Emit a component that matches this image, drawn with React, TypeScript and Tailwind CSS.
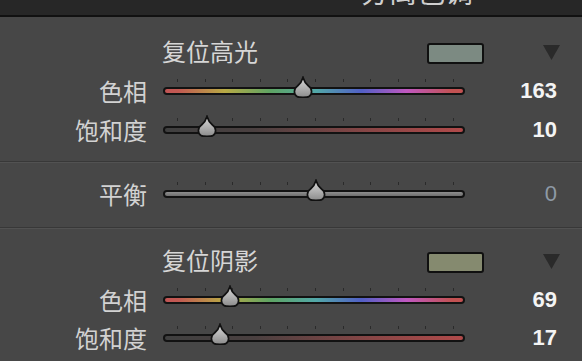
import React from "react";

const CJK = { fontFamily: '"Noto Sans CJK SC", "Noto Sans", sans-serif' };
const NUM = { fontFamily: '"Liberation Sans", Arial, sans-serif' };

const HUE_BG =
  "linear-gradient(to right, #c25555 0%, #c25a52 4.6%, #b8aa45 20%, #5ea464 35.4%, #52a8a8 50.7%, #5260c6 65.9%, #c058c0 81.1%, #c25252 96.4%, #c25252 100%)";
const SAT_BG = "linear-gradient(to right, #404040 0%, #4a4040 30%, #8a4646 70%, #b04a4a 100%)";
const BAL_BG = "linear-gradient(to bottom, #8e8e8e, #6e6e6e)";

function Thumb({ x }: { x: number }) {
  return (
    <svg
      className="absolute top-[-11px]"
      style={{ left: x - 12 }}
      width="24"
      height="23"
      viewBox="0 0 24 23"
    >
      <defs>
        <linearGradient id="tg" x1="0" y1="0" x2="0" y2="1">
          <stop offset="0" stopColor="#d8d8d8" />
          <stop offset="0.55" stopColor="#b0b0b0" />
          <stop offset="1" stopColor="#8c8c8c" />
        </linearGradient>
      </defs>
      <path
        d="M12 1.5 C12.8 4.5 14 7 17.5 10 C21.5 12.5 21.5 18.5 18 20.5 C16.5 21.5 7.5 21.5 6 20.5 C2.5 18.5 2.5 12.5 6.5 10 C10 7 11.2 4.5 12 1.5 Z"
        fill="url(#tg)"
        stroke="#111"
        strokeWidth="1.7"
      />
    </svg>
  );
}

function Slider({ bg, x }: { bg: string; x: number }) {
  const ticks = Array.from({ length: 11 }, (_, i) => 14 + i * 27.6);
  return (
    <div className="relative w-[302px] h-[8px]">
      {ticks.map((t, i) => (
        <div
          key={i}
          className="absolute top-[-8px] w-[1px] h-[3px] bg-[#2a2a2a]"
          style={{ left: Math.round(t) }}
        />
      ))}
      <div className="absolute inset-0 rounded-full bg-[#121212] p-[2px]">
        <div className="w-full h-full rounded-full" style={{ background: bg }} />
      </div>
      <Thumb x={x} />
    </div>
  );
}

function Row({
  label,
  bg,
  x,
  value,
  dim,
}: {
  label: string;
  bg: string;
  x: number;
  value: string;
  dim?: boolean;
}) {
  return (
    <div className="flex items-center h-[28px]">
      <div className="w-[147px] text-right text-[24px] leading-[28px] text-[#d2d2d2]" style={CJK}>
        {label}
      </div>
      <div className="ml-[16px]">
        <Slider bg={bg} x={x} />
      </div>
      <div
        className={
          dim
            ? "w-[92px] text-right text-[22px] leading-[28px] font-normal text-[#8e9aa6]"
            : "w-[92px] text-right text-[22px] leading-[28px] font-bold text-[#f4f4f4]"
        }
        style={NUM}
      >
        {value}
      </div>
    </div>
  );
}

function Title({ text, swatch }: { text: string; swatch: string }) {
  return (
    <div className="flex items-center h-[28px]">
      <div className="ml-[162px] w-[265px] text-[24px] leading-[28px] text-[#d6d6d6]" style={CJK}>
        {text}
      </div>
      <div
        className="mt-[4px] w-[57px] h-[21px] rounded-[3px] border-2 border-[#101010]"
        style={{ background: swatch }}
      />
      <svg className="ml-[59px] mt-[2px]" width="17" height="15" viewBox="0 0 17 15">
        <path d="M0 0 L17 0 L8.5 15 Z" fill="#2a2a2a" />
      </svg>
    </div>
  );
}

function Separator() {
  return (
    <div>
      <div className="h-[1px] bg-[#383838]" />
      <div className="h-[1px] bg-[#525252]" />
    </div>
  );
}

export default function App() {
  return (
    <div className="w-[582px] h-[361px] overflow-hidden bg-[#474747]">
      <div className="h-[15px] bg-[#272727] overflow-hidden flex">
        <div
          className="ml-[361px] mt-[-23px] text-[28px] leading-[28px] text-[#cfcfcf] whitespace-nowrap"
          style={CJK}
        >
          分离色调
        </div>
      </div>
      <div className="h-[2px] bg-[#111111]" />
      <div className="h-[144px] pt-[20px]">
        <Title text="复位高光" swatch="#7c8a82" />
        <div className="mt-[12px]">
          <Row label="色相" bg={HUE_BG} x={140} value="163" />
        </div>
        <div className="mt-[11px]">
          <Row label="饱和度" bg={SAT_BG} x={44} value="10" />
        </div>
      </div>
      <Separator />
      <div className="h-[64px] pt-[17px]">
        <Row label="平衡" bg={BAL_BG} x={153} value="0" dim />
      </div>
      <Separator />
      <div className="pt-[17px]">
        <Title text="复位阴影" swatch="#858a6f" />
        <div className="mt-[12px]">
          <Row label="色相" bg={HUE_BG} x={67} value="69" />
        </div>
        <div className="mt-[10px]">
          <Row label="饱和度" bg={SAT_BG} x={57} value="17" />
        </div>
      </div>
    </div>
  );
}
